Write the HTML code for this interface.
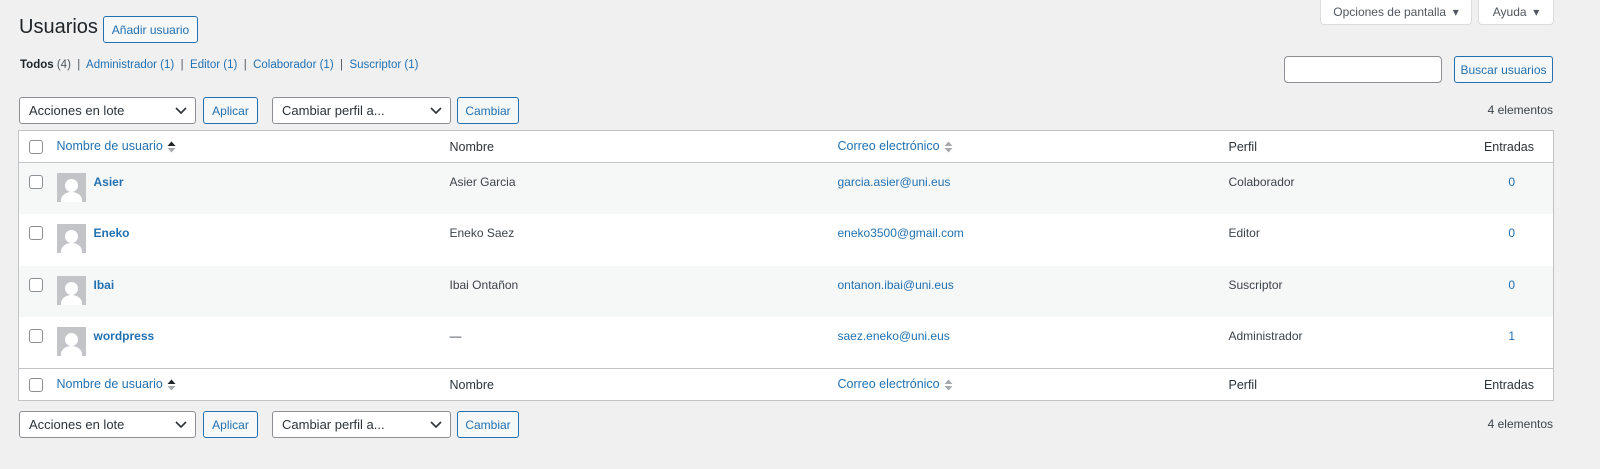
<!DOCTYPE html>
<html><head><meta charset="utf-8"><style>
*{box-sizing:border-box}
body{margin:0;background:#f0f0f1;font-family:"Liberation Sans",sans-serif;font-size:12px;color:#3c434a;width:1600px;height:469px;position:relative;overflow:hidden}
a{color:#2271b1;text-decoration:none}
.abs{position:absolute}
.btn{position:absolute;border:1px solid #2271b1;color:#2271b1;background:#f6f7f7;border-radius:3px;font-size:12px;display:flex;align-items:center;justify-content:center}
.sel{position:absolute;border:1px solid #8c8f94;background:#fff;border-radius:3px;font-size:13px;color:#2c3338;padding-left:9px;display:flex;align-items:center}
.sel svg{position:absolute;right:8px;top:8px}
.tab{position:absolute;border:1px solid #dcdcde;border-top:none;background:#fff;border-radius:0 0 4px 4px;color:#50575e;font-size:12px;display:flex;align-items:center;justify-content:center}
table{position:absolute;left:18px;top:130px;width:1536px;border:1px solid #c3c4c7;border-collapse:collapse;background:#fff}
td,th{font-weight:normal;text-align:left;padding:0;vertical-align:top;font-size:12px}
thead th,tfoot th{height:32px;vertical-align:middle;color:#2c3338;font-size:12.5px}
thead tr{border-bottom:1px solid #c3c4c7}
tfoot tr{border-top:1px solid #c3c4c7}
tbody tr{height:51.5px}
tbody tr:nth-child(odd){background:#f6f7f7}
tbody td{padding-top:12px}
.cb{width:14px;height:14px;border:1px solid #8c8f94;border-radius:3px;background:#fff;display:inline-block;margin-left:10px}
.av{display:inline-block;width:29px;height:29px;background:#c3c4c7;position:relative;overflow:hidden;vertical-align:top;margin-top:-2px}
.av:before{content:"";position:absolute;left:8px;top:6px;width:13px;height:13px;border-radius:50%;background:#fff}
.av:after{content:"";position:absolute;left:4px;top:19px;width:21px;height:16px;border-radius:50% 50% 0 0;background:#fff}
.u{font-weight:bold;margin-left:8px;vertical-align:top}
.sort{display:inline-block;vertical-align:middle;margin-left:4px}
</style></head><body>
<div class="tab" style="left:1320px;top:0;width:152px;height:25px">Opciones de pantalla&nbsp;&nbsp;▾</div>
<div class="tab" style="left:1478px;top:0;width:76px;height:25px">Ayuda&nbsp;&nbsp;▾</div>
<div class="abs" style="left:19px;top:16px;font-size:20px;color:#1d2327">Usuarios</div>
<div class="btn" style="left:103px;top:16px;width:95px;height:27px">Añadir usuario</div>
<div class="abs" style="left:20px;top:59px;font-size:11.5px;color:#50575e"><b style="color:#1d2327">Todos</b> (4) &nbsp;|&nbsp; <a>Administrador (1)</a> &nbsp;|&nbsp; <a>Editor (1)</a> &nbsp;|&nbsp; <a>Colaborador (1)</a> &nbsp;|&nbsp; <a>Suscriptor (1)</a></div>
<div class="abs" style="left:1284px;top:56px;width:158px;height:27px;border:1px solid #8c8f94;border-radius:4px;background:#fff"></div>
<div class="btn" style="left:1454px;top:56px;width:99px;height:27px">Buscar usuarios</div>
<div class="sel" style="left:19px;top:97px;width:177px;height:27px">Acciones en lote<svg width="12" height="10"><path d="M1 2l5 5 5-5" stroke="#2c3338" stroke-width="1.6" fill="none"/></svg></div>
<div class="btn" style="left:203px;top:97px;width:55px;height:27px">Aplicar</div>
<div class="sel" style="left:272px;top:97px;width:179px;height:27px">Cambiar perfil a...<svg width="12" height="10"><path d="M1 2l5 5 5-5" stroke="#2c3338" stroke-width="1.6" fill="none"/></svg></div>
<div class="btn" style="left:457px;top:97px;width:62px;height:27px">Cambiar</div>
<div class="abs" style="right:47px;top:103px;color:#3c434a">4 elementos</div>
<table>
<thead><tr><th style="width:38px"><span class="cb" style="vertical-align:middle"></span></th><th style="width:393px"><a>Nombre de usuario</a><svg class="sort" width="9" height="14"><path d="M0.5 6L4.5 1.5 8.5 6z" fill="#1d2327"/><path d="M0.5 8L4.5 12.5 8.5 8z" fill="#a7aaad"/></svg></th><th style="width:388px">Nombre</th><th style="width:391px"><a>Correo electrónico</a><svg class="sort" width="9" height="14"><path d="M0.5 6L4.5 1.5 8.5 6z" fill="#a7aaad"/><path d="M0.5 8L4.5 12.5 8.5 8z" fill="#a7aaad"/></svg></th><th style="width:210px">Perfil</th><th style="text-align:right;padding-right:19px">Entradas</th></tr></thead>
<tbody>
<tr><td><span class="cb"></span></td><td><span class="av"></span><a class="u">Asier</a></td><td>Asier Garcia</td><td><a>garcia.asier@uni.eus</a></td><td>Colaborador</td><td style="text-align:right;padding-right:38px"><a>0</a></td></tr>
<tr><td><span class="cb"></span></td><td><span class="av"></span><a class="u">Eneko</a></td><td>Eneko Saez</td><td><a>eneko3500@gmail.com</a></td><td>Editor</td><td style="text-align:right;padding-right:38px"><a>0</a></td></tr>
<tr><td><span class="cb"></span></td><td><span class="av"></span><a class="u">Ibai</a></td><td>Ibai Ontañon</td><td><a>ontanon.ibai@uni.eus</a></td><td>Suscriptor</td><td style="text-align:right;padding-right:38px"><a>0</a></td></tr>
<tr><td><span class="cb"></span></td><td><span class="av"></span><a class="u">wordpress</a></td><td>—</td><td><a>saez.eneko@uni.eus</a></td><td>Administrador</td><td style="text-align:right;padding-right:38px"><a>1</a></td></tr>
</tbody>
<tfoot><tr><th><span class="cb" style="vertical-align:middle"></span></th><th><a>Nombre de usuario</a><svg class="sort" width="9" height="14"><path d="M0.5 6L4.5 1.5 8.5 6z" fill="#1d2327"/><path d="M0.5 8L4.5 12.5 8.5 8z" fill="#a7aaad"/></svg></th><th>Nombre</th><th><a>Correo electrónico</a><svg class="sort" width="9" height="14"><path d="M0.5 6L4.5 1.5 8.5 6z" fill="#a7aaad"/><path d="M0.5 8L4.5 12.5 8.5 8z" fill="#a7aaad"/></svg></th><th>Perfil</th><th style="text-align:right;padding-right:19px">Entradas</th></tr></tfoot>
</table>
<div class="sel" style="left:19px;top:411px;width:177px;height:27px">Acciones en lote<svg width="12" height="10"><path d="M1 2l5 5 5-5" stroke="#2c3338" stroke-width="1.6" fill="none"/></svg></div>
<div class="btn" style="left:203px;top:411px;width:55px;height:27px">Aplicar</div>
<div class="sel" style="left:272px;top:411px;width:179px;height:27px">Cambiar perfil a...<svg width="12" height="10"><path d="M1 2l5 5 5-5" stroke="#2c3338" stroke-width="1.6" fill="none"/></svg></div>
<div class="btn" style="left:457px;top:411px;width:62px;height:27px">Cambiar</div>
<div class="abs" style="right:47px;top:417px;color:#3c434a">4 elementos</div>
</body></html>
